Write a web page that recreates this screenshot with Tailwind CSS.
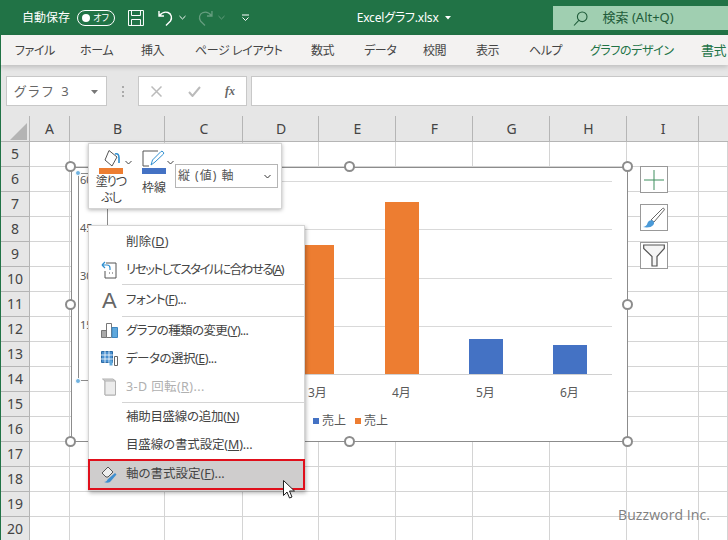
<!DOCTYPE html>
<html lang="ja">
  <head>
    <meta charset="UTF-8" />
    <title>Excelグラフ.xlsx</title>
    <script src="https://cdn.jsdelivr.net/npm/@tailwindcss/browser@4"></script>
  </head>
  <body class="m-0 bg-white">
    <div class="relative flex flex-col w-[728px] h-[540px] overflow-hidden bg-white text-[#444] font-['Noto_Sans','Noto_Sans_CJK_JP',sans-serif] [font-feature-settings:'palt']">
      <!-- Title bar -->
      <header class="flex items-center h-[35px] shrink-0 bg-[#217346] text-white text-[12px]">
        <span class="ml-[22px] w-[48px] whitespace-nowrap">自動保存</span>
        <div class="ml-[7px] w-[38px] h-[16px] rounded-full border border-white flex items-center justify-between pl-[4px] pr-[5px]">
          <span class="w-[8px] h-[8px] rounded-full bg-white"></span>
          <span class="text-[9px] leading-none">オフ</span>
        </div>
        <svg class="ml-[13px]" width="16" height="16" viewBox="0 0 16 16" fill="none" stroke="#fff" stroke-width="1"><path d="M.5.5h15v15H.5zM3.5.5v5h9v-5M3.5 15.5v-6h9v6"/></svg>
        <svg class="ml-[14px]" width="16" height="16" viewBox="0 0 16 16" fill="none" stroke="#fff" stroke-width="1.4"><path d="M1 1v5h5M1.5 5.5C4 2.500 7 1.500 10 2.500c3.500 1.300 4.500 5.500 2.500 8.500L8 15.500"/></svg>
        <svg class="ml-[5px]" width="7" height="5" viewBox="0 0 7 5" fill="none" stroke="#fff"><path d="M.5 1l3 3 3-3"/></svg>
        <svg class="ml-[11px] opacity-30" width="16" height="16" viewBox="0 0 16 16" fill="none" stroke="#fff" stroke-width="1.300"><path d="M15 1v5h-5M14.500 5.500C12 2.500 9 1.500 6 2.500c-3.500 1.300-4.500 5.500-2.500 8.500L8 15.500"/></svg>
        <svg class="ml-[5px] opacity-30" width="7" height="5" viewBox="0 0 7 5" fill="none" stroke="#fff"><path d="M.5 1l3 3 3-3"/></svg>
        <svg class="ml-[17px]" width="7" height="7" viewBox="0 0 7 7" fill="none" stroke="#fff"><path d="M0 1h7M.5 3.500l3 3 3-3"/></svg>
        <span class="ml-[108px] w-[82px] whitespace-nowrap text-[12px] tracking-[-0.2px]">Excelグラフ.xlsx</span>
        <svg class="ml-[6px]" width="6" height="4" viewBox="0 0 6 4" fill="#fff"><path d="M0 0h6L3 3.500z"/></svg>
        <div class="ml-[102px] mt-[1px] flex items-center w-[176px] h-[24px] bg-[#a0cfb1] text-[#1f5c3a] text-[13px]">
          <svg class="ml-[20px]" width="15" height="15" viewBox="0 0 15 15" fill="none" stroke="#1f5c3a" stroke-width="1.100"><circle cx="9.200" cy="5.800" r="4.800"/><path d="M5.800 9.300L1 14.500"/></svg>
          <span class="ml-[15px] whitespace-nowrap">検索 (Alt+Q)</span>
        </div>
      </header>

      <!-- Ribbon tabs -->
      <nav class="relative z-10 flex items-center h-[30px] shrink-0 pt-[1px] bg-[#f3f2f1] shadow-[0_2px_5px_rgba(0,0,0,0.18)] text-[12px] tracking-[-0.4px] text-[#444] whitespace-nowrap border-l border-[#217346]">
        <span class="ml-[14px] w-[65px]">ファイル</span>
        <span class="w-[61px]">ホーム</span>
        <span class="w-[54px]">挿入</span>
        <span class="w-[116px]">ページ レイアウト</span>
        <span class="w-[53px]">数式</span>
        <span class="w-[59px]">データ</span>
        <span class="w-[53px]">校閲</span>
        <span class="w-[53px]">表示</span>
        <span class="w-[61px]">ヘルプ</span>
        <span class="w-[111px] text-[#217346]">グラフのデザイン</span>
        <span class="text-[#217346] text-[13px]">書式</span>
      </nav>

      <!-- Formula bar -->
      <div class="flex items-center h-[51px] shrink-0 pt-[11px] pb-[10px] bg-[#e6e6e6] border-l border-[#217346]">
        <div class="ml-[5px] flex items-center justify-between w-[101px] h-[30px] bg-white border border-[#c8c8c8] pl-[7px] pr-[8px] pt-[2px] text-[13px] text-[#666] tracking-[2.500px]">
          <span>グラフ 3</span>
          <svg width="7" height="4" viewBox="0 0 7 4" fill="#777"><path d="M0 0h7L3.500 4z"/></svg>
        </div>
        <div class="ml-[15px] w-[2px] h-[11px] border-l-2 border-dotted border-[#aaa]"></div>
        <div class="ml-[14px] flex items-center w-[109px] h-[30px] bg-white border border-[#c8c8c8]">
          <svg class="ml-[12px]" width="11" height="11" viewBox="0 0 11 11" stroke="#bbb" stroke-width="1.500"><path d="M.5.5l10 10M10.500.5l-10 10"/></svg>
          <svg class="ml-[26px]" width="13" height="11" viewBox="0 0 13 11" fill="none" stroke="#bbb" stroke-width="2"><path d="M1 6l3.500 4L12 1"/></svg>
          <span class="ml-[24px] font-['Liberation_Serif',serif] italic font-bold text-[12px] text-[#666]">fx</span>
        </div>
        <div class="ml-[4px] flex-1 h-[30px] bg-white border border-[#c8c8c8] border-r-0"></div>
      </div>

      <!-- Sheet -->
      <div class="flex flex-col flex-1 border-l border-[#217346]">
        <div id="colhead" class="flex h-[26px] shrink-0 bg-[#e6e6e6] border-b border-[#b5b5b5] text-[14px] text-[#444]">
          <div class="relative w-[29px] border-r border-[#b5b5b5]">
            <svg class="absolute left-[9px] top-[7px]" width="17" height="17" viewBox="0 0 17 17" fill="#b4b4b4"><path d="M17 0v17H0z"/></svg>
          </div>
          <div class="w-[40px] flex items-center justify-center border-r border-[#b5b5b5]">A</div>
          <div class="w-[95px] flex items-center justify-center border-r border-[#b5b5b5] pl-[1px]">B</div>
          <div class="w-[78px] flex items-center justify-center border-r border-[#b5b5b5] pl-[1px]">C</div>
          <div class="w-[76px] flex items-center justify-center border-r border-[#b5b5b5] pl-[1px]">D</div>
          <div class="w-[77px] flex items-center justify-center border-r border-[#b5b5b5] pl-[1px]">E</div>
          <div class="w-[77px] flex items-center justify-center border-r border-[#b5b5b5] pl-[1px]">F</div>
          <div class="w-[77px] flex items-center justify-center border-r border-[#b5b5b5] pl-[1px]">G</div>
          <div class="w-[77px] flex items-center justify-center border-r border-[#b5b5b5] pl-[1px]">H</div>
          <div class="w-[72px] flex items-center justify-center border-r border-[#b5b5b5] pl-[1px]">I</div>
          <div class="flex-1"></div>
        </div>
        <div id="rows" class="flex flex-col"></div>
      </div>

      <!-- Chart -->
      <div class="absolute left-[71px] top-[167px] w-[557px] h-[275px] bg-white border border-[#8c8c8c] text-[12px] text-[#595959]">
        <div class="absolute left-[6px] top-[5px] w-[30px] h-[208px] border border-[#8c8c8c] text-[11px] leading-none overflow-hidden pl-[1px]">
          <div class="h-[48px]">60</div>
          <div class="h-[48px]">45</div>
          <div class="h-[49px]">30</div>
          <div>15</div>
        </div>
        <span class="absolute left-[3px] top-[2px] w-[6px] h-[6px] rounded-full bg-[#6fb2e0] border border-white"></span>
        <span class="absolute left-[3px] top-[210px] w-[6px] h-[6px] rounded-full bg-[#6fb2e0] border border-white"></span>
        <div class="absolute left-[36px] right-[15px] top-[13px] h-[194px] flex flex-col justify-between">
          <div class="h-px bg-[#d9d9d9]"></div>
          <div class="h-px bg-[#d9d9d9]"></div>
          <div class="h-px bg-[#d9d9d9]"></div>
          <div class="h-px bg-[#d9d9d9]"></div>
          <div class="h-px bg-[#d0d0d0]"></div>
        </div>
        <!-- bars -->
        <div class="absolute left-[233px] bottom-[67px] w-[29px] h-[129px] bg-[#ed7d31]"></div>
        <div class="absolute left-[313px] bottom-[67px] w-[34px] h-[172px] bg-[#ed7d31]"></div>
        <div class="absolute left-[397px] bottom-[67px] w-[34px] h-[35px] bg-[#4472c4]"></div>
        <div class="absolute left-[481px] bottom-[67px] w-[34px] h-[29px] bg-[#4472c4]"></div>
        <span class="absolute left-[236px] top-[216px]">3月</span>
        <span class="absolute left-[320px] top-[216px]">4月</span>
        <span class="absolute left-[404px] top-[216px]">5月</span>
        <span class="absolute left-[488px] top-[216px]">6月</span>
        <div class="absolute left-[241px] top-[244px] flex items-center">
          <span class="w-[6px] h-[6px] bg-[#4472c4]"></span>
          <span class="ml-[3px] w-[33px]">売上</span>
          <span class="w-[6px] h-[6px] bg-[#ed7d31]"></span>
          <span class="ml-[3px]">売上</span>
        </div>
      </div>
      <!-- Chart handles -->
      <span class="absolute left-[65px] top-[161px] w-[11px] h-[11px] rounded-full bg-white border-2 border-[#8c8c8c]"></span>
      <span class="absolute left-[344px] top-[161px] w-[11px] h-[11px] rounded-full bg-white border-2 border-[#8c8c8c]"></span>
      <span class="absolute left-[622px] top-[161px] w-[11px] h-[11px] rounded-full bg-white border-2 border-[#8c8c8c]"></span>
      <span class="absolute left-[65px] top-[299px] w-[11px] h-[11px] rounded-full bg-white border-2 border-[#8c8c8c]"></span>
      <span class="absolute left-[622px] top-[299px] w-[11px] h-[11px] rounded-full bg-white border-2 border-[#8c8c8c]"></span>
      <span class="absolute left-[65px] top-[436px] w-[11px] h-[11px] rounded-full bg-white border-2 border-[#8c8c8c]"></span>
      <span class="absolute left-[344px] top-[436px] w-[11px] h-[11px] rounded-full bg-white border-2 border-[#8c8c8c]"></span>
      <span class="absolute left-[622px] top-[436px] w-[11px] h-[11px] rounded-full bg-white border-2 border-[#8c8c8c]"></span>

      <!-- Chart side buttons -->
      <div class="absolute left-[640px] top-[166px] flex flex-col gap-[11px]">
        <div class="w-[28px] h-[27px] bg-white border border-[#999] flex items-center justify-center">
          <svg width="20" height="20" viewBox="0 0 20 20" stroke="#3f8f5f" stroke-width="1"><path d="M10 0v20M0 10h20"/></svg>
        </div>
        <div class="w-[28px] h-[27px] bg-white border border-[#999] flex items-center justify-center">
          <svg width="24" height="22" viewBox="0 0 24 22"><path d="M9 13L20.500 1.500c1-.8 2.500.3 1.700 1.500L12 15z" fill="#fff" stroke="#666"/><path d="M1 20c3-.5 4-2 4.500-4 .7-2 3-3.500 5-2.500s2 3 .8 4.500c-2 2.500-6.500 3-10.300 2z" fill="#4a9ad8"/></svg>
        </div>
        <div class="w-[28px] h-[27px] bg-white border border-[#999] flex items-center justify-center">
          <svg width="22" height="23" viewBox="0 0 22 23" fill="#f5f5f5" stroke="#555" stroke-width="1.200"><path d="M.7 1h20.600v3.500L14 12.500V22H9v-9.500L.7 4.500z"/></svg>
        </div>
      </div>

      <!-- Mini toolbar -->
      <div class="absolute left-[88px] top-[143px] flex w-[194px] h-[66px] bg-white border border-[#d4d4d4] shadow-[0_1px_4px_rgba(0,0,0,0.3)] text-[12px] leading-[16px] text-[#444]">
        <div class="relative flex flex-col items-center w-[42px] pl-[2px] pt-[6px]">
          <svg width="22" height="17" viewBox="0 0 22 17" fill="none"><path d="M5 10L9 .5l8 6.500-5 9z" stroke="#555"/><path d="M15 4c3-1 4 1 4 4v5" stroke="#2f8fd0" stroke-width="1.600"/></svg>
          <svg class="absolute left-[36px] top-[16px]" width="7" height="5" viewBox="0 0 7 5" fill="none" stroke="#444"><path d="M.5 1l3 3 3-3"/></svg>
          <div class="w-[24px] h-[6px] mt-[1px] bg-[#ed7d31]"></div>
          <span class="text-center tracking-[-1px]">塗りつ<br />ぶし</span>
        </div>
        <div class="relative flex flex-col items-center w-[44px] pl-[2px] pt-[6px]">
          <svg width="24" height="17" viewBox="0 0 24 17" fill="none"><path d="M16 1H1v15h6" stroke="#555"/><path d="M9 15l1.500-5L19 1.500c1-1 3.500 1 2.500 2.500L13 12z" stroke="#2f8fd0"/></svg>
          <svg class="absolute left-[36px] top-[16px]" width="7" height="5" viewBox="0 0 7 5" fill="none" stroke="#444"><path d="M.5 1l3 3 3-3"/></svg>
          <div class="w-[24px] h-[6px] mt-[1px] bg-[#4472c4]"></div>
          <span class="mt-[6px]">枠線</span>
        </div>
        <div class="mt-[20px] flex items-center justify-between w-[103px] h-[24px] border border-[#b5b5b5] pl-[2px] pr-[6px] tracking-[1px] text-[#555]">
          <span>縦 (値) 軸</span>
          <svg width="7" height="5" viewBox="0 0 7 5" fill="none" stroke="#333"><path d="M.5 1l3 3 3-3"/></svg>
        </div>
      </div>

      <!-- Context menu -->
      <div class="absolute left-[88px] top-[225px] flex flex-col w-[217px] h-[266px] pt-[3px] bg-white border border-[#d4d4d4] shadow-[1px_2px_4px_rgba(0,0,0,0.3)] text-[12.500px] text-[#444] whitespace-nowrap">
        <div class="flex items-center h-[27px] pl-[37px]"><span class="tracking-[0.2px]">削除(<u>D</u>)</span></div>
        <div class="relative flex items-center h-[28px] pl-[37px]">
          <svg class="absolute left-[12px] top-[5px]" width="17" height="18" viewBox="0 0 17 18" fill="none"><path d="M5 2h10v15H4v-7" stroke="#555"/><path d="M1 4l3-3M1 4l3 3M1 4h5c2 0 3 1.500 3 3v2" stroke="#2f8fd0" stroke-width="1.200"/><path d="M8 12h1M11 12h1" stroke="#555"/></svg>
          <span class="tracking-[-1.500px]">リセットしてスタイルに合わせる(<u>A</u>)</span>
        </div>
        <div class="h-px ml-[33px] bg-[#d4d4d4]"></div>
        <div class="relative flex items-center h-[31px] pl-[37px]">
          <span class="absolute left-[13px] top-[2px] text-[22px] leading-[28px] text-[#666] font-['Liberation_Sans',sans-serif]">A</span>
          <span class="tracking-[-0.5px]">フォント(<u>F</u>)...</span>
        </div>
        <div class="h-px ml-[33px] bg-[#d4d4d4]"></div>
        <div class="relative flex items-center h-[29px] pl-[37px]">
          <svg class="absolute left-[12px] top-[5px]" width="17" height="16" viewBox="0 0 17 16"><path d="M.5 8.500h5v7h-5z" fill="#aaa" stroke="#777"/><path d="M5.500 1.500h5v14h-5z" fill="#fff" stroke="#777"/><path d="M11 5.500h5.500v10H11z" fill="#5fa8dc" stroke="#3e86c0"/></svg>
          <span class="tracking-[-0.6px]">グラフの種類の変更(<u>Y</u>)...</span>
        </div>
        <div class="relative flex items-center h-[27px] pl-[37px]">
          <svg class="absolute left-[12px] top-[5px]" width="17" height="15" viewBox="0 0 17 15"><path d="M.5.500h11v11H.5z" fill="#4a90d0" stroke="#2b6ca8"/><path d="M4 0v12M8 0v12M0 4h12M0 8h12" stroke="#fff" stroke-width=".800"/><path d="M8.500 9.500h3v5h-3z" fill="#5fa8dc"/><path d="M13.500 5.500h3v9h-3z" fill="#fff" stroke="#666"/></svg>
          <span class="tracking-[-0.5px]">データの選択(<u>E</u>)...</span>
        </div>
        <div class="relative flex items-center h-[29px] pl-[37px] text-[#b0b0b0]">
          <svg class="absolute left-[13px] top-[5px]" width="14" height="18" viewBox="0 0 14 18"><path d="M3 3L.5 1h10.500l2.500 2v14H3z" fill="#d8d8d8" stroke="#b0b0b0"/><path d="M3 3h10.500v14H3z" fill="#ececec" stroke="#b0b0b0"/></svg>
          <span class="tracking-[0.4px]">3-D 回転(<u>R</u>)...</span>
        </div>
        <div class="h-px ml-[33px] bg-[#d4d4d4]"></div>
        <div class="flex items-center h-[29px] pl-[37px]"><span class="tracking-[-0.3px]">補助目盛線の追加(<u>N</u>)</span></div>
        <div class="flex items-center h-[27px] pl-[37px]"><span class="tracking-[-0.15px]">目盛線の書式設定(<u>M</u>)...</span></div>
        <div class="relative flex items-center h-[31px] ml-[-1px] mr-[-1px] pl-[36px] bg-[#cfcdcd] border-2 border-[#e00f1b]">
          <svg class="absolute left-[11px] top-[4px]" width="18" height="19" viewBox="0 0 18 19" fill="none"><path d="M1 8l6-6 5 5-5 5H5z" fill="#eee" stroke="#555"/><path d="M3 17c2 0 3-1 3.500-2.500L14 8l1.500 1.500-6 7c-1.500 1.500-4 1.500-6.500.5z" fill="#3f8fd0"/></svg>
          <span>軸の書式設定(<u>F</u>)...</span>
        </div>
      </div>

      <!-- Mouse cursor -->
      <svg class="absolute left-[283px] top-[480px]" width="13" height="20" viewBox="0 0 13 20"><path d="M.5.500v15l3.500-3.500 2.500 6 2.500-1-2.500-6h5z" fill="#fff" stroke="#222"/></svg>

      <span class="absolute left-[618px] top-[505px] text-[14px] leading-[20px] font-medium tracking-[0.1px] text-[#7f7f7f] font-['Open_Sans',sans-serif] [font-feature-settings:normal] whitespace-nowrap">Buzzword Inc.</span>
    </div>

    <script>
      const rows = document.getElementById("rows");
      const widths = [40, 95, 78, 76, 77, 77, 77, 77, 72, 29];
      for (let n = 5; n <= 20; n++) {
        const row = document.createElement("div");
        row.className = "flex h-[25px] shrink-0";
        const head = document.createElement("div");
        head.className =
          "w-[29px] flex items-center justify-center pb-[1px] bg-[#e6e6e6] border-r border-b border-[#b5b5b5] text-[14px] text-[#444]";
        head.textContent = n;
        row.appendChild(head);
        widths.forEach((w) => {
          const cell = document.createElement("div");
          cell.className = "border-r border-b border-[#d4d4d4]";
          cell.style.width = w + "px";
          row.appendChild(cell);
        });
        rows.appendChild(row);
      }
    </script>
  </body>
</html>
